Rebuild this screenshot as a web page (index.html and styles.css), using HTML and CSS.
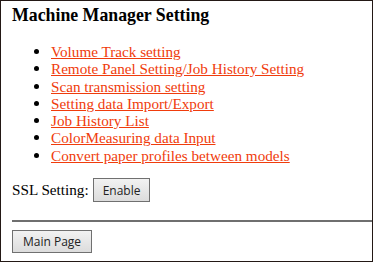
FILE: index.html
```html
<!DOCTYPE html>
<html lang="en">
<head>
  <meta charset="UTF-8">
  <title>Machine Manager Setting</title>
  <link rel="stylesheet" href="styles.css">
</head>
<body>

  <div class="frame">
    <h3 class="title">Machine Manager Setting</h3>

    <ul class="menu">
      <li><a href="#">Volume Track setting</a></li>
      <li><a href="#">Remote Panel Setting/Job History Setting</a></li>
      <li><a href="#">Scan transmission setting</a></li>
      <li><a href="#">Setting data Import/Export</a></li>
      <li><a href="#">Job History List</a></li>
      <li><a href="#">ColorMeasuring data Input</a></li>
      <li><a href="#">Convert paper profiles between models</a></li>
    </ul>

    <div class="ssl">
      <span>SSL Setting:</span>
      <button class="btn">Enable</button>
    </div>

    <hr class="divider">

    <button class="btn main">Main Page</button>
  </div>

</body>
</html>
```

FILE: styles.css
```css
html, body {
  margin: 0;
  height: 100%;
}

body {
  font-family: "Liberation Serif", "Times New Roman", serif;
  font-size: 15.2px;
  color: #000;
  background: #fff;
}

.frame {
  box-sizing: border-box;
  height: 262px;
  border: 1px solid #231815;
  padding: 4px 0 0 11px;
}

.title {
  margin: 0;
  font-size: 17.8px;
  font-weight: bold;
}

.menu {
  margin: 17px 0 0 0;
  padding-left: 39px;
  line-height: 17.3px;
}

.menu li::marker {
  color: #000;
  font-size: 17px;
}

.menu a {
  color: #f03c0c;
}

.ssl {
  margin-top: 14px;
  display: flex;
  align-items: center;
  gap: 4px;
}

.btn {
  font-family: "Open Sans", "Noto Sans", sans-serif;
  font-size: 12px;
  color: #222;
  background: linear-gradient(#f2f2f2, #dcdcdc);
  border: 1px solid #707070;
  border-radius: 0;
  height: 24px;
  padding: 0 9px;
}

.divider {
  margin: 18px 0 8px 0;
  border: none;
  border-top: 2px solid #6f6f6f;
  height: 0;
}

.main {
  height: 23px;
  padding: 0 10px;
}
```
